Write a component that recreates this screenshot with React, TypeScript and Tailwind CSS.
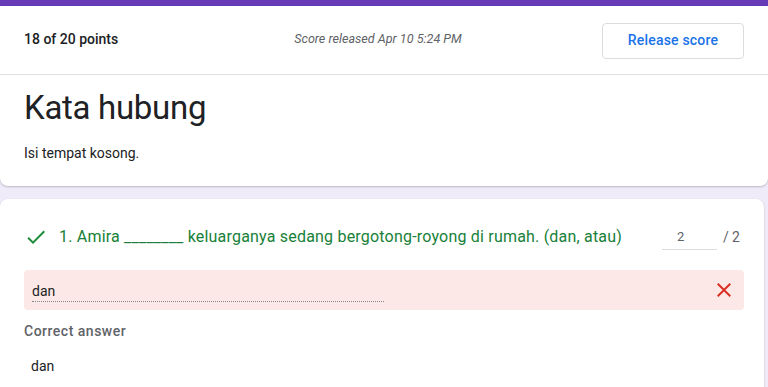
import React from "react";

export default function App() {
  return (
    <div className="w-[768px] h-[387px] overflow-hidden bg-[#f0ebf8] font-['Roboto',sans-serif]">
      <div className="h-[6px] bg-[#673ab7]" />
      <div className="bg-white rounded-b-[8px] shadow-[0_1px_2px_rgba(60,64,67,0.3)]">
        <div className="h-[69px] flex items-center pl-[24px] pr-[24px] border-b border-[#e0e0e0]">
          <div className="w-[260px] text-[14px] font-medium text-[#202124] pb-[1px]">18 of 20 points</div>
          <div className="flex-1 text-center text-[12.6px] italic text-[#5f6368] pb-[1px] pr-[12px]">
            Score released Apr 10 5:24 PM
          </div>
          <div className="w-[260px] flex justify-end">
            <button className="w-[142px] h-[36px] mt-[1px] rounded-[4px] border border-[#dadce0] text-[14px] font-medium text-[#1a73e8] tracking-[0.2px]">
              Release score
            </button>
          </div>
        </div>
        <div className="h-[111px] pl-[24px] pt-[13px]">
          <div className="text-[33px] leading-[40px] text-[#202124] tracking-[-0.3px]">Kata hubung</div>
          <div className="mt-[15px] text-[14px] leading-[20px] text-[#202124]">Isi tempat kosong.</div>
        </div>
      </div>
      <div className="mt-[13px] w-[764px] bg-white rounded-t-[8px] shadow-[0_1px_2px_rgba(60,64,67,0.3)] pl-[24px] pr-[20px] pt-[26px] pb-[20px]">
        <div className="flex items-center h-[24px]">
          <svg width="24" height="24" viewBox="0 0 24 24" className="shrink-0 ml-[0px]">
            <path d="M9 16.17L4.83 12l-1.42 1.41L9 19 21 7l-1.41-1.41z" fill="#1e8e3e" />
          </svg>
          <div className="ml-[11px] text-[16px] tracking-[0.2px] text-[#188038] whitespace-nowrap">
            1. Amira ________ keluarganya sedang bergotong-royong di rumah. (dan, atau)
          </div>
          <div className="flex-1" />
          <div className="flex items-center mr-[4px]">
            <div className="w-[55px] h-[24px] mt-[2px] border-b border-[#dadce0] text-[13px] text-[#5f6368] pl-[15px] leading-[22px]">
              2
            </div>
            <div className="ml-[6px] text-[14px] text-[#5f6368] whitespace-nowrap">/ 2</div>
          </div>
        </div>
        <div className="mt-[21px] h-[40px] rounded-[4px] bg-[#fce8e6] flex items-center pl-[8px] pr-[8px]">
          <div className="w-[352px] h-[24px] border-b border-dotted border-[#80868b] text-[14px] text-[#202124] leading-[22px] pt-[2px]">
            dan
          </div>
          <div className="flex-1" />
          <svg width="24" height="24" viewBox="0 0 24 24">
            <path d="M19 6.41L17.59 5 12 10.59 6.41 5 5 6.41 10.59 12 5 17.59 6.41 19 12 13.41 17.59 19 19 17.59 13.41 12z" fill="#d93025" />
          </svg>
        </div>
        <div className="mt-[13px] text-[14px] leading-[16px] font-medium tracking-[0.5px] text-[#5f6368]">Correct answer</div>
        <div className="mt-[17px] pl-[7px] text-[14px] leading-[20px] text-[#202124]">dan</div>
      </div>
    </div>
  );
}
